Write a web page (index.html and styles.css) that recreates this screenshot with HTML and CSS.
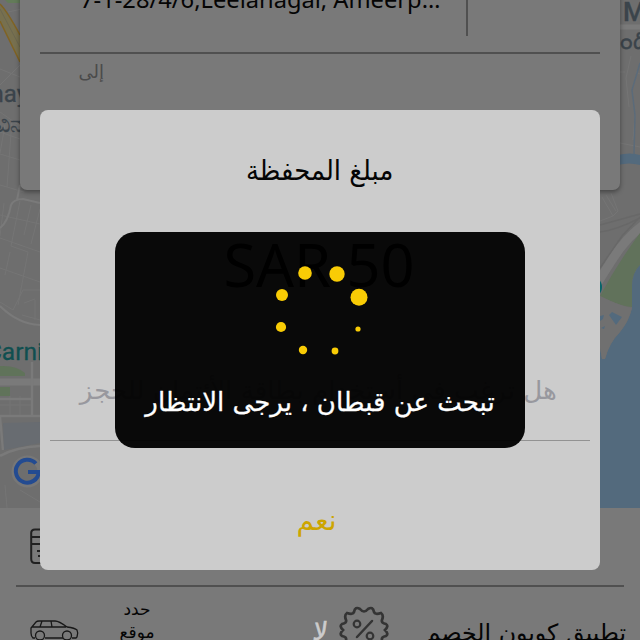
FILE: index.html
```html
<!DOCTYPE html>
<html lang="ar">
<head>
<meta charset="utf-8">
<title>مبلغ المحفظة</title>
<link rel="stylesheet" href="styles.css">
</head>
<body>
<main class="screen">
  <section class="map">
    <svg class="map-art" viewBox="0 0 640 508" width="640" height="508" aria-hidden="true">
      <rect width="640" height="508" fill="#6e6e6e"/>
      <path d="M5 0H20V3H8Z" fill="#637b59"/>
      <g fill="none" stroke="#757575" stroke-width="1">
        <path d="M8 12L22 9M0 85L20 65M0 69L20 77M0 112L20 126M0 132L20 139M0 154L20 160M5 125L0 153M12 120L7 187M0 185L24 192M0 215L40 224M0 238L40 252M0 268L40 282M4 203L0 236M20 201L11 246L28 252M31 205L24 235M40 209L31 244M28 252L18 305M10 252L5 275M0 302L13 310L23 290L40 290M22 315L40 320M24 303L35 299M35 300V320M32 362V415M10 396V415M20 396V415M0 405H32M5 485L7 508M20 490L40 502"/>
        <path d="M631 56L626 78L629 107M636 72L640 74M620 143L640 147M635 115L633 140M620 72H625M602 197L613 216L600 221M606 195L616 211M611 193L618 211L613 216"/>
        <path d="M600 232Q617 230 640 218M600 225L640 214M600 268L622 236L640 217" stroke="#686868" stroke-width="1.5"/>
      </g>
      <g fill="none" stroke="#7a7a7a">
        <path d="M0 228Q8 222 11 205Q14 199 23 199L40 203M17 200L20 185M0 306Q18 324 40 325" stroke-width="2"/>
        <path d="M0 382H40" stroke-width="7"/>
        <path d="M0 399H32M0 416H40M32 362V415M0 417L3 450M0 456Q16 447 40 446" stroke-width="2.500"/>
        <path d="M620 27H640" stroke-width="5"/>
        <path d="M592 292C612 260 622 240 645 224" stroke-width="9"/>
      </g>
      <path d="M0 4Q7 11 20 35V62L0 20Z" fill="#77704f"/>
      <path d="M0 4Q7 11 20 35M0 21L20 62" stroke="#806323" stroke-width="1.5" fill="none"/>
      <path d="M0 9L20 47" stroke="#6b6750" fill="none"/>
      <path d="M0 366Q16 365 25 373V376H0ZM0 387H10V396H0Z" fill="#60735a"/>
      <path d="M3 423L40 422V443L4 450Z" fill="#686c71"/>
      <path d="M640 63L632 90L635 115L634 154" stroke="#5b6b7a" stroke-width="1.5" fill="none"/>
      <path d="M618 155Q630 152 640 155V165Q629 162 618 165Z" fill="#536a7d"/>
      <path d="M600 296Q617 264 640 233V265Q632 274 632 286L632 307Q622 307 600 296Z" fill="#61725b"/>
      <path d="M600 348L602 359H605Q609 343 620 332Q629 321 632 308L632 286Q632 273 640 265V508H600Z" fill="#536a7d"/>
      <path d="M600 296Q620 306 632 308Q629 321 620 332Q609 343 605 359H602L600 348Z" fill="#707070"/>
      <path d="M609 315L612 312L622 317L616 325ZM600 316L604 315L603 319L600 321ZM601 328L605 326L604 329Z" fill="#536a7d"/>
      <circle cx="591" cy="287" r="11" fill="#08656a"/>
    </svg>
    <span class="place place-nay">nay</span>
    <span class="place place-kn">ವಿನ</span>
    <span class="place place-m">M</span>
    <span class="place place-kn2">డంథి</span>
    <span class="place place-carni">Carni</span>
    <svg class="google" viewBox="0 0 32 32" width="32" height="32" aria-hidden="true">
      <circle cx="15.500" cy="16.500" r="13" fill="none" stroke="#777" stroke-width="6"/>
      <path d="M23.900 8.500A11.500 11.500 0 1 0 26.800 17H16" fill="none" stroke="#234b91" stroke-width="4"/>
    </svg>
  </section>

  <section class="address-card">
    <div class="from-row"><span class="from-text">7-1-28/4/6,Leelanagar, Ameerp…</span></div>
    <div class="to-row" dir="rtl">إلى</div>
  </section>

  <section class="options">
    <div class="payment-row">
      <svg viewBox="0 0 30 38" width="30" height="38" aria-hidden="true"><path d="M5 1.500H29V35H5Q1.200 35 1.200 31V5Q1.200 1.500 5 1.500ZM2 9H29M2 16H29" fill="none" stroke="#202020" stroke-width="2"/><path d="M7 23H12M8 28H12" stroke="#202020" stroke-width="2"/></svg>
    </div>
    <div class="booking-row">
      <svg class="car" viewBox="0 0 50 24" width="50" height="24" aria-hidden="true"><g fill="none" stroke="#181818" stroke-width="1.300"><path d="M5 18H3Q1 16 1 13V8L6 2Q7 1 9 1H25Q29 1 37 7Q45 8 47 10Q48.500 13 47 17L46 18H42M15 18H33M2 7H36M12 1L10 7M21 1L22 7"/><circle cx="10" cy="15.500" r="4.500"/><circle cx="37" cy="15.500" r="4.500"/></g></svg>
      <div class="pick" dir="rtl"><span>حدد</span><span>موقع</span></div>
      <svg class="coupon" viewBox="0 0 50 50" width="50" height="50" aria-hidden="true"><path d="M21 4Q25 9 29 4Q34 1 35 7Q36 10 42 8Q45 10 43 15Q42 18 47 19Q50 21 46 25Q50 29 47 31Q42 32 43 35Q45 40 42 42Q36 40 35 43Q34 49 29 46Q25 41 21 46Q16 49 15 43Q14 40 8 42Q5 40 7 35Q8 32 3 31Q0 29 4 25Q0 21 3 19Q8 18 7 15Q5 10 8 8Q14 10 15 7Q16 1 21 4Z" fill="none" stroke="#343434" stroke-width="2.700"/><path d="M18 32L33 16" stroke="#343434" stroke-width="2.500" stroke-linecap="round"/><g fill="none" stroke="#343434" stroke-width="2.200"><circle cx="18" cy="19" r="3.300"/><circle cx="31" cy="31" r="3.300"/></g></svg>
      <div class="coupon-text" dir="rtl">تطبيق كوبون الخصم</div>
    </div>
  </section>

  <section class="dialog" dir="rtl">
    <h1 class="title"><span>مبلغ المحفظة</span></h1>
    <p class="amount" dir="ltr"><span>SAR 50</span></p>
    <p class="question"><span>هل ترغب في أستخدام بطاقة الأئتمان للحجز</span></p>
    <div class="rule"></div>
    <div class="yes"><span>نعم</span></div>
  </section>
  <span class="no" dir="rtl">لا</span>

  <section class="loader" dir="rtl">
    <svg class="spinner" viewBox="0 0 100 100" width="100" height="100" aria-hidden="true"><g fill="#f9cc05"><circle cx="35" cy="41" r="6.800"/><circle cx="67" cy="42" r="7.700"/><circle cx="89" cy="65.200" r="8.500"/><circle cx="88" cy="97" r="2.600"/><circle cx="65" cy="119" r="3.400"/><circle cx="33" cy="118" r="4.200"/><circle cx="11" cy="95" r="5.100"/><circle cx="12" cy="63" r="6"/></g></svg>
    <p class="loading"><span>تبحث عن قبطان ، يرجى الانتظار</span></p>
  </section>
</main>
</body>
</html>
```
FILE: styles.css
```css
* { box-sizing: border-box; }
body { margin: 0; font-family: "Noto Sans", "DejaVu Sans", sans-serif; }
h1, p { margin: 0; font-weight: 400; }
.screen { position: relative; width: 640px; height: 640px; overflow: hidden; background: #797979; }
.map { position: absolute; inset: 0 0 auto 0; height: 508px; overflow: hidden; }
.map-art { display: block; }
.place { position: absolute; line-height: 30px; color: #3b444b; font-family: Roboto, sans-serif; white-space: nowrap; -webkit-text-stroke: .3px; }
.place-nay { right: 612px; top: 79px; font-size: 24px; }
.place-kn { left: -5px; top: 109px; font-size: 24px; }
.place-m { left: 623px; top: -3px; font-size: 26px; font-weight: 500; }
.place-kn2 { left: 601px; top: 26px; font-size: 25px; }
.place-carni { right: 597px; top: 337px; font-size: 24.5px; color: #104f50; }
.google { position: absolute; left: 12px; top: 455px; overflow: visible; }
.address-card { position: absolute; left: 20px; top: -20px; width: 600px; height: 210px; padding: 0 20px; background: #797979; border-radius: 7px; box-shadow: 0 2px 5px rgba(0,0,0,.4); }
.from-row { height: 74px; border-bottom: 2px solid #505050; padding-left: 40px; background: linear-gradient(#505050,#505050) 426px 0 / 2px 56px no-repeat; }
.from-text { display: block; padding-top: 3px; font-size: 23.7px; line-height: 32px; color: #050505; white-space: nowrap; }
.to-row { width: 64px; font: 18px/36px "DejaVu Sans", sans-serif; color: #4b4b4b; }
.options { position: absolute; left: 0; top: 508px; width: 640px; height: 132px; overflow: hidden; background: #797979; }
.payment-row { height: 79px; margin: 0 16px; padding: 20px 14px; border-bottom: 2px solid #505050; }
.booking-row { display: flex; align-items: flex-start; font-family: "DejaVu Sans", sans-serif; color: #050505; }
.car { margin: 33px 0 0 30px; }
.pick { display: flex; flex-direction: column; align-items: center; width: 50px; margin: 11px 0 0 32px; font-size: 17px; line-height: 23px; }
.coupon { margin: 18px 0 0 177px; }
.coupon-text { flex: 1; margin: 28px 14px 0 0; font-size: 23.7px; line-height: 36px; white-space: nowrap; }
.dialog { position: absolute; left: 40px; top: 110px; width: 560px; height: 460px; border-radius: 8px; background: #ccc; font-family: "DejaVu Sans", sans-serif; text-align: center; white-space: nowrap; }
.dialog span, .loading span { display: inline-block; }
.title { height: 122px; font-size: 28px; line-height: 122px; color: #050505; }
.title span { transform: scaleX(.925); }
.amount { height: 110px; font: 59.5px/64px "Noto Sans", sans-serif; color: #000; }
.amount span { transform: translateX(-1px); }
.question { height: 98px; font-size: 25px; line-height: 97px; color: #98989e; }
.question span { transform: translateX(-2px) scaleX(1.045); }
.rule { height: 1px; margin: 0 10px; background: #929292; }
.yes { padding-right: 7px; font-size: 28px; line-height: 160px; color: #cda500; }
.no { position: absolute; left: 313px; top: 615px; font: 25px/34px "DejaVu Sans", sans-serif; color: #ccc; transform: skewX(-8deg); -webkit-text-stroke: .6px #ccc; }
.loader { position: absolute; left: 115px; top: 232px; width: 410px; height: 216px; border-radius: 20px; background: rgba(0,0,0,.955); }
.spinner { display: block; margin: 0 auto; overflow: visible; }
.loading { padding-top: 50px; text-align: center; font: 26px/40px "DejaVu Sans", sans-serif; color: #fff; white-space: nowrap; -webkit-text-stroke: .3px #fff; }
```
